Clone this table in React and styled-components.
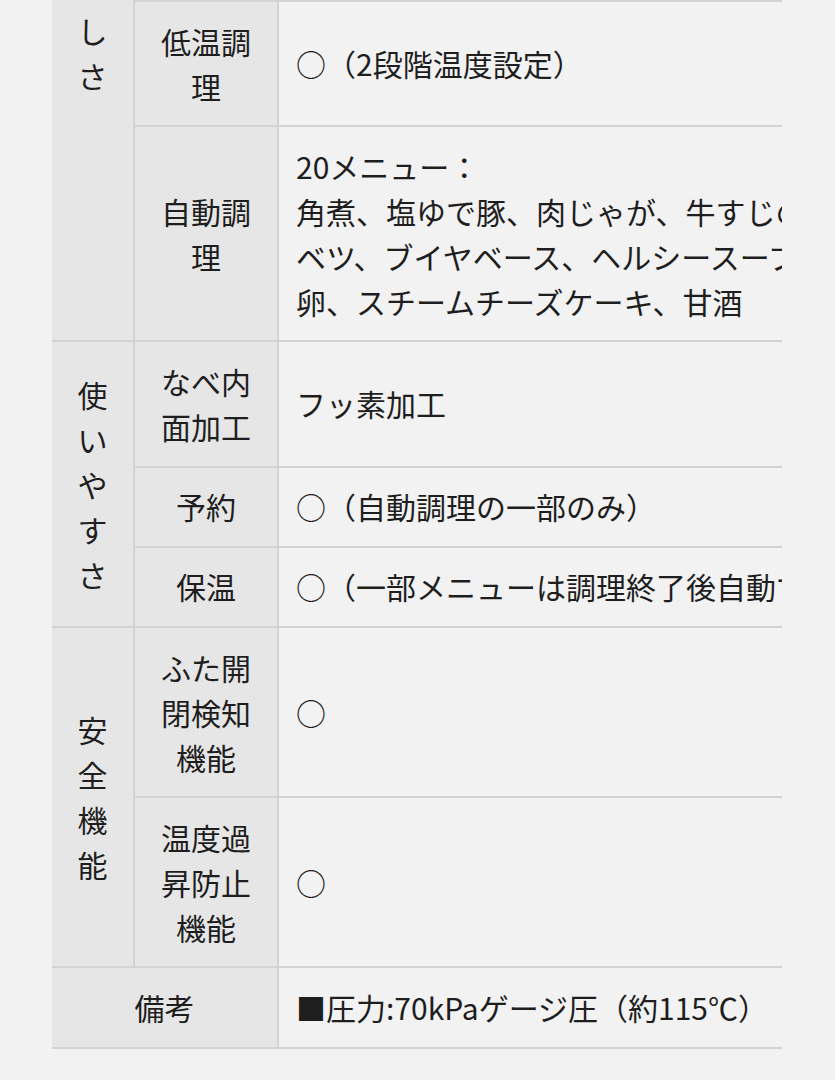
import React from "react";
import styled, { createGlobalStyle, css } from "styled-components";

const GlobalStyle = createGlobalStyle`
  html, body {
    margin: 0;
    padding: 0;
    background: #f2f2f2;
  }
  body {
    font-family: "Noto Sans CJK JP", "Noto Sans", sans-serif;
    color: #1e1e1e;
  }
`;

const ScrollArea = styled.div`
  margin: 0 53px 0 52px;
  overflow: hidden;
`;

const SpecTable = styled.table`
  border-collapse: separate;
  border-spacing: 0;
  table-layout: fixed;
  width: 1025px;
  font-size: 30px;
  line-height: 45px;
`;

const Col = styled.col`
  width: ${(p) => p.$w}px;
`;

const lineColor = "#d3d3d3";

const cellBase = css`
  box-sizing: border-box;
  padding: 16.6px;
  border-bottom: 2px solid ${lineColor};
  font-weight: 400;
  color: #1e1e1e;
  ${(p) => p.$first && css`border-top: 2px solid ${lineColor};`}
`;

const Category = styled.th`
  ${cellBase}
  padding-left: 14px;
  padding-right: 14px;
  background: #e6e6e6;
  text-align: center;
  vertical-align: ${(p) => (p.$top ? "top" : "middle")};
  ${(p) => p.$top && css`padding-top: 8px;`}
`;

const Item = styled.th`
  ${cellBase}
  padding-left: 15px;
  padding-right: 15px;
  background: #e6e6e6;
  text-align: center;
  vertical-align: middle;
  border-left: ${(p) => (p.$flush ? "none" : `2px solid ${lineColor}`)};
`;

const Value = styled.td`
  ${cellBase}
  padding-left: 17px;
  padding-right: 17px;
  border-left: 2px solid ${lineColor};
  text-align: left;
  vertical-align: middle;
  white-space: nowrap;
  overflow: hidden;
`;

const Lines = ({ lines }) =>
  lines.map((l, i) => (
    <React.Fragment key={i}>
      {i > 0 && <br />}
      {l}
    </React.Fragment>
  ));

export default function App() {
  return (
    <>
      <GlobalStyle />
      <ScrollArea>
        <SpecTable>
          <colgroup>
            <Col $w={81} />
            <Col $w={144} />
            <Col $w={800} />
          </colgroup>
          <tbody>
            <tr>
              <Category rowSpan={2} $top>
                しさ
              </Category>
              <Item $first>低温調理</Item>
              <Value $first>○（2段階温度設定）</Value>
            </tr>
            <tr>
              <Item>自動調理</Item>
              <Value>
                <Lines
                  lines={[
                    "20メニュー：",
                    "角煮、塩ゆで豚、肉じゃが、牛すじの煮込み、ロールキャ",
                    "ベツ、ブイヤベース、ヘルシースープ、温泉",
                    "卵、スチームチーズケーキ、甘酒",
                  ]}
                />
              </Value>
            </tr>
            <tr>
              <Category rowSpan={3}>使いやすさ</Category>
              <Item>なべ内面加工</Item>
              <Value>フッ素加工</Value>
            </tr>
            <tr>
              <Item>予約</Item>
              <Value>○（自動調理の一部のみ）</Value>
            </tr>
            <tr>
              <Item>保温</Item>
              <Value>○（一部メニューは調理終了後自動で保温）</Value>
            </tr>
            <tr>
              <Category rowSpan={2}>安全機能</Category>
              <Item>ふた開閉検知機能</Item>
              <Value>○</Value>
            </tr>
            <tr>
              <Item>温度過昇防止機能</Item>
              <Value>○</Value>
            </tr>
            <tr>
              <Item colSpan={2} $flush>
                備考
              </Item>
              <Value>■圧力:70kPaゲージ圧（約115℃）</Value>
            </tr>
          </tbody>
        </SpecTable>
      </ScrollArea>
    </>
  );
}
